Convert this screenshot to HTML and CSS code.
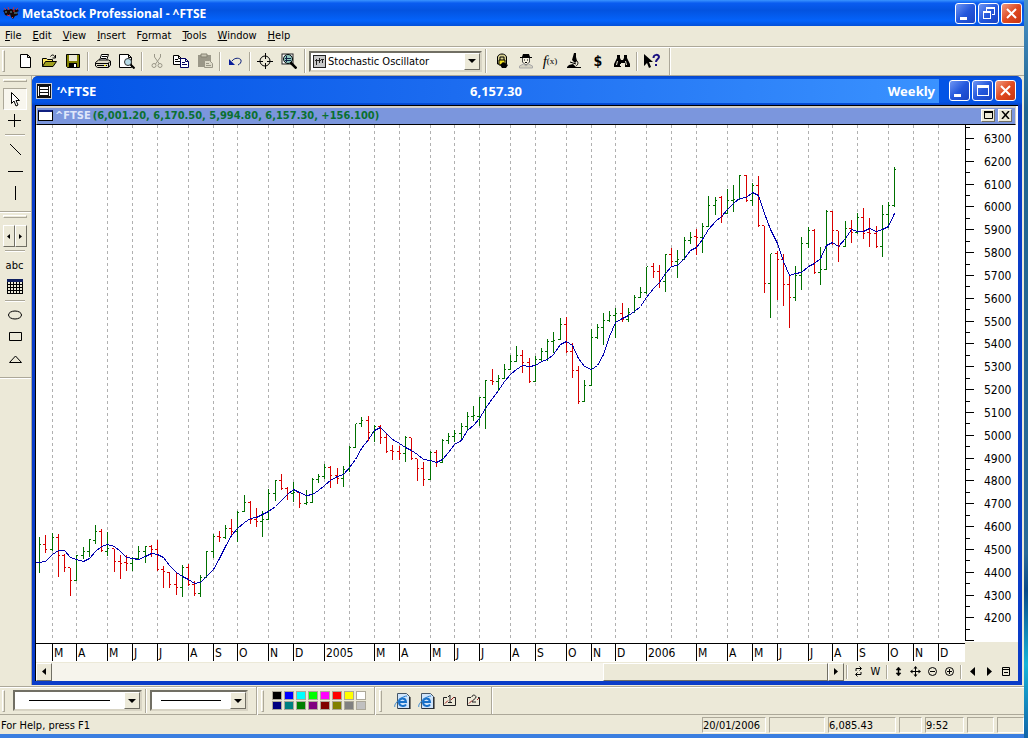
FILE: index.html
```html
<!DOCTYPE html>
<html lang="en">
<head>
  <meta charset="UTF-8">
  <title>MetaStock Professional - ^FTSE</title>
  <link rel="stylesheet" href="styles.css">
</head>
<body>

  <div class="app">

    <!-- Title bar -->
    <header class="titlebar">
      <svg class="logo" width="18" height="16" viewBox="0 0 18 16">
        <path d="M1 6l3-2 2 1 3-1 3 1 3-1 2 2-2 1 1 3-3 1-2 3-2-2-1-3-2 2-3-1-1-3z" fill="#180808"/>
        <path d="M2 3l2 2M6 2l1 3M12 2l-1 3M16 3l-2 2" stroke="#c03040" stroke-width="1"/>
        <path d="M3 7h2M8 7h2M12 8h3" stroke="#58a0b0"/>
        <path d="M5 10l3 1M11 6l2 0M10 12l1 1" stroke="#e03040"/>
      </svg>
      <h1>MetaStock Professional - ^FTSE</h1>
      <div class="win-buttons">
        <button class="win-btn" aria-label="Minimize"><svg width="19" height="19"><rect x="4" y="13" width="7" height="3"/></svg></button>
        <button class="win-btn" aria-label="Restore"><svg width="19" height="19"><path d="M7 3h9v8h-3v-1h2V5H8v2H7zM4 7h8v8H4zM5 9v5h6V9z" fill-rule="evenodd"/></svg></button>
        <button class="win-btn close" aria-label="Close"><svg width="19" height="19"><path d="M5 5l9 9M14 5l-9 9" class="cross"/></svg></button>
      </div>
    </header>

    <!-- Menu -->
    <nav class="menu">
      <button><u>F</u>ile</button>
      <button><u>E</u>dit</button>
      <button><u>V</u>iew</button>
      <button><u>I</u>nsert</button>
      <button>F<u>o</u>rmat</button>
      <button><u>T</u>ools</button>
      <button><u>W</u>indow</button>
      <button><u>H</u>elp</button>
    </nav>

    <!-- Main toolbar -->
    <div class="toolbar">
      <span class="grip"></span>
      <button class="tool" aria-label="New"><svg width="16" height="16"><path d="M3.500 1.500h7l3 3v10h-10zM10.500 1.500v3h3" fill="#fff" stroke="#000"/></svg></button>
      <button class="tool" aria-label="Open"><svg width="16" height="16"><path d="M1.500 13.500v-8h4l1 1h5v3" fill="#ffe860" stroke="#000"/><path d="M1.500 13.500l3-5h11l-3.500 5z" fill="#a0a020" stroke="#000"/><path d="M9.500 3.500c2-3 4-1 4.500 1M14.500 2v3h-3" fill="none" stroke="#000"/></svg></button>
      <button class="tool" aria-label="Save"><svg width="16" height="16"><path d="M1.500 1.500h13v13h-12l-1-1z" fill="#808000" stroke="#000"/><path d="M4 2h8v6H4z" fill="#ece9d8"/><path d="M4 10h8v4H4z" fill="#000"/><path d="M9 11h2v3H9z" fill="#fff"/></svg></button>
      <span class="sep"></span>
      <button class="tool" aria-label="Print"><svg width="16" height="16"><path d="M4.500 7.500l2-6h7l-2 6" fill="#fff" stroke="#000"/><path d="M7 3.500h5M6 5.500h5" stroke="#000"/><path d="M.5 9.500l3-2.500h10l2 1v4l-2 2.500h-11l-2-1.500z" fill="#e0dcc8" stroke="#000"/><path d="M1 10.500h12l2-2M2 12.500h10M13.500 10v4" stroke="#000" fill="none"/><path d="M9 12h2v1H9z" fill="#e8e000"/></svg></button>
      <button class="tool" aria-label="Print preview"><svg width="16" height="16"><path d="M.5 1.500h9l3 3v10H.5zM9.500 1.500v3h3" fill="#fff" stroke="#000"/><circle cx="9" cy="9" r="3.500" fill="#b8dce8" stroke="#333"/><path d="M11.500 11.500l4 4" stroke="#000" stroke-width="2"/></svg></button>
      <span class="sep"></span>
      <button class="tool" aria-label="Cut" disabled><svg width="16" height="16" fill="none" stroke="#9a9788"><path d="M5.500 1v3l5 7M11.500 1v3l-5 7"/><circle cx="5" cy="12.500" r="2"/><circle cx="11" cy="12.500" r="2"/></svg></button>
      <button class="tool" aria-label="Copy"><svg width="16" height="16" fill="#fff" stroke="#000"><path d="M.5 2.500h5l3 3v6h-8zM5.500 2.500v3h3M2 6.500h3M2 8.500h5"/><path d="M7.500 5.500h5l3 3v6h-8zM12.500 5.500v3h3M9 9.500h3M9 11.500h5" stroke="#000060"/></svg></button>
      <button class="tool" aria-label="Paste" disabled><svg width="16" height="16"><path d="M1 2h13v12H1z" fill="#9a9788"/><path d="M4 1h6v3H4z" fill="#c8c5b4" stroke="#858272"/><path d="M7.500 7.500h5l3 3v4h-8z" fill="#dedbca" stroke="#9a9788"/><path d="M9 10.500h3M9 12.500h5" stroke="#9a9788"/></svg></button>
      <span class="sep"></span>
      <button class="tool" aria-label="Undo"><svg width="16" height="16"><path d="M5 8c3-4 8-3 9-1 .5 2.500-1 4-3 5" fill="none" stroke="#0a1e7a"/><path d="M2 6v6h6z" fill="#0a1e9a"/></svg></button>
      <span class="sep"></span>
      <button class="tool" aria-label="Crosshair"><svg width="16" height="16" fill="none" stroke="#000"><circle cx="8" cy="8" r="5"/><path d="M8.500 0v6M8.500 10v6M0 8.500h6M10 8.500h6"/></svg></button>
      <button class="tool" aria-label="Zoom chart"><svg width="16" height="16"><rect x="1" y="1" width="11" height="10" fill="#fff" stroke="#222"/><circle cx="7" cy="6" r="4.500" fill="#90c8c0" stroke="#000"/><path d="M4 5.500h6M4 7.500h6M5.500 3v6" stroke="#124"/><path d="M9.500 9.500l6 6" stroke="#000" stroke-width="2.500"/></svg></button>
      <span class="sep wide"></span>
      <div class="combo indicator">
        <svg width="13" height="13"><rect x=".5" y=".5" width="12" height="12" fill="#c8c8c8" stroke="#222"/><path d="M3.500 4v6M6.500 3v5M9.500 4v4M2 5.500h3M5 5.500h3M8 4.500h3" stroke="#222"/></svg>
        <select aria-label="Indicator"><option>Stochastic Oscillator</option></select>
        <span class="arrow"></span>
      </div>
      <span class="sep wide"></span>
      <button class="tool" aria-label="Expert Advisor"><svg width="16" height="16"><path d="M3.500 4c1-4 8-4 9 0v7h-9z" fill="#d8d090" stroke="#000"/><path d="M5 7h6v5H5z" fill="#f0e020" stroke="#000"/><path d="M6 7V4h4v3" fill="none" stroke="#000"/><path d="M6 12l3-3 5 3-2 3H8z" fill="#000"/></svg></button>
      <button class="tool" aria-label="Explorer"><svg width="16" height="16"><path d="M4 4l1-3h6l1 3z" fill="#000"/><path d="M2 4.500h12" stroke="#000"/><path d="M4.500 5v4l3 3h1l3-3V5" fill="#f4f0e0" stroke="#444"/><path d="M6 7h1M9 7h1M7 9.500h2" stroke="#000"/><path d="M1.500 15v-2l4-2 2.500 2 2.500-2 4 2v2z" fill="#d4d1c0" stroke="#aaa"/></svg></button>
      <button class="tool fx" aria-label="Indicator Builder"><i>f</i><small>(x)</small></button>
      <button class="tool" aria-label="System Tester"><svg width="16" height="16"><path d="M8 0h2v4l1 4-2 2-3-3z" fill="#000"/><path d="M4 9l6 2M10 7c3 2 2 5 0 6" stroke="#000" fill="none"/><path d="M3 12l4-1 3 3H1z" fill="#000"/><path d="M1 14.500h14" stroke="#000" stroke-width="1"/></svg></button>
      <button class="tool dollar" aria-label="OptionScope">$</button>
      <button class="tool" aria-label="Find"><svg width="16" height="16"><path d="M3 2h3v3l1 2h2l1-2V2h3v3l3 6v3h-5v-4H7v4H0v-3l3-6z"/><path d="M3.500 8l-1 4M11.500 8l1 4M6.500 11v2" stroke="#ece9d8"/></svg></button>
      <span class="sep"></span>
      <button class="tool" aria-label="Context help"><svg width="18" height="16"><path d="M1 1v12l3-3 2 5 2-1-2-5h4z"/><path d="M10.500 5c0-4 5.500-4 5.500-1 0 2-3 2-3 5M13 11v2" fill="none" stroke="#1a1080" stroke-width="2"/></svg></button>
      <span class="sep end"></span>
    </div>

    <div class="workspace">

      <!-- Drawing tools -->
      <aside class="side">
        <div class="side-group">
          <span class="hgrip"></span>
          <button class="tool pressed" aria-label="Select"><svg width="16" height="16"><path d="M4.500 1.500v11l2.500-2.500 2 5 2-1-2-4.500h3.500z" fill="#fff" stroke="#000"/></svg></button>
          <button class="tool" aria-label="Crosshair"><svg width="16" height="16"><path d="M7.500 1v13M1 7.500h13" stroke="#000"/></svg></button>
          <span class="hsep"></span>
          <button class="tool" aria-label="Trendline"><svg width="16" height="16"><path d="M3 3l11 11" stroke="#000"/></svg></button>
          <button class="tool" aria-label="Horizontal line"><svg width="16" height="16"><path d="M1 8.500h15" stroke="#000"/></svg></button>
          <button class="tool" aria-label="Vertical line"><svg width="16" height="16"><path d="M8.500 1v14" stroke="#000"/></svg></button>
        </div>
        <div class="side-group">
          <span class="hgrip"></span>
          <div class="pair">
            <button aria-label="Previous"><svg width="5" height="7"><path d="M4 1v5L1 3.500z"/></svg></button>
            <button aria-label="Next"><svg width="5" height="7"><path d="M1 1v5l3-2.500z"/></svg></button>
          </div>
          <span class="hsep"></span>
          <button class="tool">abc</button>
          <button class="tool" aria-label="Grid"><svg width="16" height="16"><path d="M.5 2.500h15M.5 5.500h15M.5 8.500h15M.5 11.500h15M.5 14.500h15M.5 1v14M3.500 1v14M6.500 1v14M9.500 1v14M12.500 1v14M15.500 1v14" stroke="#000"/><path d="M0 0h16v3H0z" fill="#102060"/></svg></button>
          <span class="hsep"></span>
          <button class="tool" aria-label="Ellipse"><svg width="16" height="16"><ellipse cx="8" cy="8" rx="6.500" ry="4" fill="none" stroke="#000"/></svg></button>
          <button class="tool" aria-label="Rectangle"><svg width="16" height="16"><path d="M2.500 3.500h12v8h-12z" fill="none" stroke="#000"/></svg></button>
          <button class="tool" aria-label="Triangle"><svg width="16" height="16"><path d="M2.500 11.500h12L8.500 5z" fill="none" stroke="#000"/></svg></button>
        </div>
      </aside>

      <!-- Chart window -->
      <main class="chart-window">
        <div class="chart-title">
          <svg class="chart-icon" width="16" height="16"><path d="M0 0h16v16H0z" fill="#c8ccd8"/><path d="M1 1h14v14H1z" fill="#111"/><path d="M2 3h1v10H2zM13 3h1v10h-1zM4 4h8v2H4zM4 7h8v2H4zM4 10h8v2H4z" fill="#fff"/></svg>
          <div class="caption">
            <span>‘^FTSE</span>
            <span>6,157.30</span>
            <span>Weekly</span>
          </div>
          <div class="win-buttons">
            <button class="win-btn" aria-label="Minimize"><svg width="19" height="19"><rect x="4" y="13" width="7" height="3"/></svg></button>
            <button class="win-btn" aria-label="Maximize"><svg width="19" height="19"><path d="M4 4h12v11H4zM5 7v7h10V7z" fill-rule="evenodd"/></svg></button>
            <button class="win-btn close" aria-label="Close"><svg width="19" height="19"><path d="M5 5l9 9M14 5l-9 9" class="cross"/></svg></button>
          </div>
        </div>

        <div class="pane">
          <div class="pane-title">
            <span class="pane-icon"></span>
            <span class="symbol">^FTSE</span>
            <span class="quote">(6,001.20, 6,170.50, 5,994.80, 6,157.30, +156.100)</span>
            <button class="mini" aria-label="Maximize pane"><svg width="9" height="8"><path d="M.5 1h8v6.500h-8z" fill="none" stroke="#000"/><path d="M0 1h9" stroke="#000" stroke-width="2"/></svg></button>
            <button class="mini" aria-label="Close pane"><svg width="9" height="8"><path d="M1 0l7 8M8 0L1 8" stroke="#000" stroke-width="1.500"/></svg></button>
          </div>
          <div class="plot-row">
            <svg class="plot" id="plot" viewBox="36 125 929 516" preserveAspectRatio="none"></svg>
            <div class="y-axis" id="y-axis"></div>
          </div>
          <div class="x-row">
            <div class="x-axis" id="x-axis"></div>
            <div class="corner"></div>
          </div>
          <div class="scroll-row">
            <button class="scroll-btn" aria-label="Scroll left"><svg width="4" height="7"><path d="M4 0v7L0 3.500z"/></svg></button>
            <div class="track"><div class="thumb"></div></div>
            <button class="scroll-btn" aria-label="Scroll right"><svg width="4" height="7"><path d="M0 0v7l4-3.500z"/></svg></button>
            <span class="sep"></span>
            <button class="nav" aria-label="Refresh"><svg width="11" height="11" fill="none" stroke="#000"><path d="M3 5V2.500h5M6.500.5l2 2-2 2M8 6v2.500H3M4.500 6.500l-2 2 2 2"/></svg></button>
            <button class="nav">W</button>
            <span class="sep"></span>
            <button class="nav" aria-label="Scale vertically"><svg width="11" height="11"><path d="M5.500 1L8 4H6v3h2l-2.500 3L3 7h2V4H3z" stroke="#000" stroke-width=".5"/></svg></button>
            <button class="nav" aria-label="Move"><svg width="11" height="11"><path d="M5.500 1v9M1 5.500h9" stroke="#000"/><path d="M5.500 0l2 2.500h-4zM5.500 11l2-2.500h-4zM0 5.500l2.500-2v4zM11 5.500l-2.500-2v4z"/></svg></button>
            <button class="nav" aria-label="Zoom out"><svg width="11" height="11" fill="none" stroke="#000"><circle cx="5.500" cy="5.500" r="4"/><path d="M3 5.500h5"/></svg></button>
            <button class="nav" aria-label="Zoom in"><svg width="11" height="11" fill="none" stroke="#000"><circle cx="5.500" cy="5.500" r="4"/><path d="M3 5.500h5M5.500 3v5"/></svg></button>
            <span class="sep"></span>
            <button class="nav" aria-label="Previous"><svg width="11" height="11"><path d="M8 1v9L3 5.500z"/></svg></button>
            <button class="nav" aria-label="Next"><svg width="11" height="11"><path d="M3 1v9l5-4.500z"/></svg></button>
            <button class="nav" aria-label="Options"><svg width="11" height="11" fill="none" stroke="#000"><path d="M1.500 1.500h7v8h-7zM1 3.500h8M3 6.500h4"/></svg></button>
          </div>
        </div>
      </main>
    </div>

    <!-- Line styles and colours -->
    <div class="toolbar bottom">
      <span class="grip"></span>
      <div class="combo line-style">
        <select aria-label="Line style"><option></option></select>
        <span class="sample"></span>
        <span class="arrow"></span>
      </div>
      <span class="sep wide"></span>
      <div class="combo line-weight">
        <select aria-label="Line weight"><option></option></select>
        <span class="sample"></span>
        <span class="arrow"></span>
      </div>
      <span class="divider"></span>
      <span class="grip"></span>
      <div class="palette">
        <button class="c-black" aria-label="Black"></button>
        <button class="c-blue" aria-label="Blue"></button>
        <button class="c-cyan" aria-label="Cyan"></button>
        <button class="c-lime" aria-label="Lime"></button>
        <button class="c-magenta" aria-label="Magenta"></button>
        <button class="c-red" aria-label="Red"></button>
        <button class="c-yellow" aria-label="Yellow"></button>
        <button class="c-white" aria-label="White"></button>
        <button class="c-navy" aria-label="Navy"></button>
        <button class="c-teal" aria-label="Teal"></button>
        <button class="c-green" aria-label="Green"></button>
        <button class="c-purple" aria-label="Purple"></button>
        <button class="c-maroon" aria-label="Maroon"></button>
        <button class="c-olive" aria-label="Olive"></button>
        <button class="c-gray" aria-label="Gray"></button>
        <button class="c-silver" aria-label="Silver"></button>
      </div>
      <span class="divider"></span>
      <span class="grip"></span>
      <button class="tool" aria-label="Web page 1"><svg width="17" height="16"><path d="M3.500.5h9l3 3v12h-12z" fill="#cfe4fa" stroke="#456"/><path d="M16 4v12H4" fill="none" stroke="#111"/><path d="M12 11.500c-1.500 2.500-7 2-7-2.500s6.500-5 7 0H5" fill="none" stroke="#1870c8" stroke-width="2"/><path d="M1 14c-2-2 6-11 12-11" fill="none" stroke="#2a80d0"/></svg></button>
      <button class="tool" aria-label="Web page 2"><svg width="17" height="16"><path d="M3.500.5h9l3 3v12h-12z" fill="#cfe4fa" stroke="#456"/><path d="M16 4v12H4" fill="none" stroke="#111"/><path d="M12 11.500c-1.500 2.500-7 2-7-2.500s6.500-5 7 0H5" fill="none" stroke="#1870c8" stroke-width="2"/><path d="M1 14c-2-2 6-11 12-11" fill="none" stroke="#2a80d0"/></svg></button>
      <button class="tool" aria-label="Chart layout 1"><svg width="16" height="16" fill="none"><path d="M5 4.500H1.500v8h12v-8H11M6 4l2-2v7M6 9.500h4" stroke="#222"/><path d="M3 10.500l3-3M9 7l3-3" stroke="#a02020"/></svg></button>
      <button class="tool" aria-label="Chart layout 2"><svg width="16" height="16" fill="none"><path d="M5 4.500H1.500v8h12v-8H12M6 4c0-3 4-2 4 0s-4 3-4 5h4" stroke="#222"/><path d="M3 10.500l3-3M11 7l2-2" stroke="#a02020"/></svg></button>
      <span class="sep end"></span>
    </div>

    <!-- Status bar -->
    <footer class="status">
      <span class="hint">For Help, press F1</span>
      <span class="cell w64">20/01/2006</span>
      <span class="cell w56"></span>
      <span class="cell w68">6,085.43</span>
      <span class="cell w22"></span>
      <span class="cell w40">9:52</span>
      <span class="cell w27"></span>
      <span class="cell w27"></span>
    </footer>
    <div class="frame-bottom"></div>
  </div>
  <div class="desktop"></div>

  <script src="chart.js"></script>
</body>
</html>
```
FILE: styles.css
```css
:root {
  --face: #ece9d8;
  --shadow: #aca899;
  --dark: #716f64;
  --ui: "DejaVu Sans Condensed", Tahoma, sans-serif;
}

* {
  box-sizing: border-box;
}

body {
  margin: 0;
  display: flex;
  height: 100vh;
  font-family: var(--ui);
  font-size: 11px;
  color: #000;
  background-color: var(--face);
  overflow: hidden;
}

button {
  font: inherit;
  color: inherit;
  padding: 0;
  border: none;
  background: none;
}

.app {
  flex: 1;
  min-width: 0;
  display: flex;
  flex-direction: column;
}

.desktop {
  width: 4px;
  background: linear-gradient(#4a92c8, #20648f 15%, #2a6a98 75%, #0a4a88 80%, #18b4d8 90%, #1064a8);
}

/* title bar */
.titlebar {
  height: 26px;
  flex: none;
  display: flex;
  align-items: center;
  padding: 0 2px;
  gap: 2px;
  color: #fff;
  background: linear-gradient(#3a94ff, #0a5cf0 12%, #0353e0 40%, #0463fb 80%, #0450d8);
}

.titlebar h1 {
  flex: 1;
  margin: 0;
  font-family: "Noto Sans", sans-serif;
  font-size: 12px;
  font-weight: bold;
}

.win-buttons {
  display: flex;
  gap: 2px;
}

.win-btn {
  width: 21px;
  height: 21px;
  border: 1px solid #fff;
  border-radius: 3px;
  background: linear-gradient(135deg, #6f96f4, #2458dc 50%, #1a44c4);
}

.win-btn svg {
  display: block;
  fill: #fff;
}

.win-btn.close {
  background: linear-gradient(135deg, #f09a80, #e04a20 50%, #c83410);
}

.cross {
  stroke: #fff;
  stroke-width: 2;
}

/* menu */
.menu {
  height: 20px;
  flex: none;
  display: flex;
  align-items: center;
  gap: 11px;
  padding: 0 5px 2px;
}

/* toolbars */
.toolbar {
  height: 30px;
  flex: none;
  display: flex;
  align-items: center;
  border-top: 1px solid var(--shadow);
  border-bottom: 1px solid var(--shadow);
  box-shadow: inset 0 1px #fff;
}

.grip {
  width: 3px;
  height: 22px;
  margin: 0 8px 0 2px;
  border: 1px solid;
  border-color: #fff var(--shadow) var(--shadow) #fff;
}

.tool {
  width: 24px;
  height: 22px;
  display: flex;
  align-items: center;
  justify-content: center;
}

.sep {
  width: 2px;
  height: 19px;
  margin: 0 2px;
  border-left: 1px solid var(--shadow);
  border-right: 1px solid #fff;
}

.sep.wide {
  height: 24px;
  margin: 0 3px;
}

.sep.end {
  height: 27px;
  margin: 0 5px;
}

.divider {
  width: 2px;
  height: 28px;
  margin: 0 1px 0 8px;
  border-left: 1px solid var(--shadow);
  border-right: 1px solid #fff;
}

.fx {
  font-family: "Liberation Serif", serif;
  font-size: 15px;
}

.fx small {
  font-size: 9px;
}

.dollar {
  font-size: 14px;
  font-weight: bold;
}

.combo {
  position: relative;
  display: flex;
  align-items: center;
  height: 21px;
  border: 2px solid;
  border-color: var(--dark) #d8d4c4 #d8d4c4 var(--dark);
  background-color: #fff;
}

.combo svg {
  margin: 0 2px;
}

.combo select {
  flex: 1;
  min-width: 0;
  height: 17px;
  appearance: none;
  border: none;
  padding: 0;
  background: none;
  font: inherit;
  color: #000;
}

.indicator {
  width: 173px;
}

.line-style {
  width: 129px;
}

.line-weight {
  width: 98px;
}

.sample {
  position: absolute;
  left: 14px;
  right: 30px;
  border-top: 1px solid #000;
}

.line-weight .sample {
  left: 9px;
  right: 25px;
}

.arrow {
  width: 16px;
  height: 17px;
  display: flex;
  align-items: center;
  justify-content: center;
  border: 1px solid;
  border-color: #fff var(--dark) var(--dark) #fff;
  background-color: var(--face);
}

.arrow::after {
  content: "";
  border: 4px solid transparent;
  border-top-color: #000;
  border-bottom: none;
}

/* drawing tools */
.workspace {
  flex: 1;
  min-height: 0;
  display: flex;
  padding-right: 2px;
}

.side {
  width: 32px;
  border-right: 1px solid var(--shadow);
}

.side-group {
  display: flex;
  flex-direction: column;
  align-items: center;
  padding: 0 2px 7px 0;
  border-bottom: 1px solid var(--shadow);
  box-shadow: 0 1px #fff;
}

.hgrip {
  width: 24px;
  height: 3px;
  margin: 3px 0 6px;
  border: 1px solid;
  border-color: #fff var(--shadow) var(--shadow) #fff;
}

.hsep {
  width: 20px;
  height: 2px;
  margin: 2px 0;
  border-top: 1px solid var(--shadow);
  border-bottom: 1px solid #fff;
}

.pressed {
  border: 1px solid;
  border-color: var(--shadow) #fff #fff var(--shadow);
  background-color: #f8f6ee;
}

.pair {
  display: flex;
  height: 24px;
  padding: 1px 0;
}

.pair button {
  width: 12px;
  border: 1px solid;
  border-color: #fff var(--dark) var(--dark) #fff;
}

/* chart window */
.chart-window {
  flex: 1;
  min-width: 0;
  display: flex;
  flex-direction: column;
  padding: 0 4px 4px 3px;
  border-radius: 6px 6px 0 0;
  background-color: #0a3cc8;
}

.chart-title {
  height: 29px;
  flex: none;
  display: flex;
  align-items: center;
  gap: 5px;
  margin: 0 -4px 0 -3px;
  padding: 0 6px 0 4px;
  border-radius: 6px 6px 0 0;
  background: linear-gradient(#0a48c8, #0354e6 10%, #0354e6 90%, #0444c8);
}

.caption {
  flex: 1;
  height: 24px;
  display: grid;
  grid-template-columns: 1fr auto 1fr;
  align-items: center;
  margin-right: 5px;
  padding-right: 4px;
  color: #fff;
  font-family: "Noto Sans", sans-serif;
  font-size: 13px;
  font-weight: bold;
  background: linear-gradient(90deg, #0354e6, #1c6cf0 45%, #3a92ff);
}

.caption span:last-child {
  text-align: right;
}

.pane {
  flex: 1;
  min-height: 0;
  display: flex;
  flex-direction: column;
  border-top: 1px solid #000;
  border-left: 1px solid #000;
  background-color: #fff;
}

.pane-title {
  height: 19px;
  flex: none;
  display: flex;
  align-items: center;
  margin-right: 2px;
  border: solid #d4d0c8;
  border-width: 2px 1px;
  border-bottom: 1px solid #000;
  padding: 0 3px 2px 1px;
  background-color: #7b96dd;
  font-size: 11px;
  font-weight: bold;
}

.pane-icon {
  width: 15px;
  height: 11px;
  margin-right: 2px;
  border: 1px solid #000;
  border-top: 2px solid #102080;
  background-color: #fff;
}

.symbol {
  margin-right: 2px;
  color: #dfe6fa;
}

.quote {
  flex: 1;
  color: #0a7030;
}

.mini {
  width: 14px;
  height: 13px;
  margin-left: 3px;
  display: flex;
  align-items: center;
  justify-content: center;
  border: 1px solid;
  border-color: #fff var(--dark) var(--dark) #fff;
  background-color: var(--face);
}

.plot-row {
  flex: 1;
  min-height: 0;
  display: flex;
}

.plot {
  flex: 1;
  min-width: 0;
  height: 100%;
  shape-rendering: crispEdges;
}

.plot path {
  fill: none;
  vector-effect: non-scaling-stroke;
}

.grid {
  stroke: #b0b0b0;
  stroke-dasharray: 3 3;
}

.up {
  stroke: #007000;
}

.down {
  stroke: #d80000;
}

.average {
  stroke: #0000b0;
}

.y-axis,
.corner {
  position: relative;
  width: 53px;
}

.y-axis {
  border-left: 1px solid #000;
  font-size: 12px;
  line-height: 14px;
}

/* each mark's top comes from its price */
.y-mark {
  position: absolute;
  left: 0;
  width: 4px;
  height: 1px;
  background-color: #000;
}

.y-mark.major {
  width: 8px;
}

.y-mark span {
  position: absolute;
  left: 18px;
  top: -6px;
}

.x-row {
  height: 21px;
  flex: none;
  display: flex;
}

.x-axis {
  position: relative;
  flex: 1;
  margin-top: 2px;
  border-top: 1px solid #000;
  font-size: 12px;
  line-height: 18px;
}

.x-axis span {
  position: absolute;
  top: 0;
  height: 17px;
  padding-left: 1px;
  border-left: 1px solid #000;
}

.corner {
  margin-top: 1px;
  background-color: var(--face);
}

.scroll-row {
  height: 19px;
  flex: none;
  display: flex;
  align-items: center;
  padding-right: 3px;
  background-color: var(--face);
}

.scroll-btn {
  width: 16px;
  height: 18px;
  border: 1px solid;
  border-color: #fff var(--dark) var(--dark) #fff;
  background-color: var(--face);
}

.track {
  flex: 1;
  height: 18px;
  background-color: #f6f4ec;
}

.thumb {
  width: 29%;
  height: 100%;
  margin-left: auto;
  border: 1px solid;
  border-color: #fff var(--dark) var(--dark) #fff;
  background-color: var(--face);
}

.scroll-row .sep {
  height: 14px;
}

.nav {
  width: 17px;
  height: 18px;
  display: flex;
  align-items: center;
  justify-content: center;
}

/* bottom toolbar */
.toolbar.bottom {
  height: 29px;
  margin-top: 1px;
}

.palette {
  display: grid;
  grid-template-columns: repeat(8, 10px);
  grid-auto-rows: 9px;
  gap: 1px 2px;
}

.palette button {
  border: 1px solid var(--shadow);
}

.c-black { background-color: #000; }
.c-blue { background-color: #0000ff; }
.c-cyan { background-color: #00ffff; }
.c-lime { background-color: #00ff00; }
.c-magenta { background-color: #ff00ff; }
.c-red { background-color: #ff0000; }
.c-yellow { background-color: #ffff00; }
.c-white { background-color: #fff; }
.c-navy { background-color: #000080; }
.c-teal { background-color: #008080; }
.c-green { background-color: #008000; }
.c-purple { background-color: #800080; }
.c-maroon { background-color: #800000; }
.c-olive { background-color: #808000; }
.c-gray { background-color: #808080; }
.c-silver { background-color: #c0c0c0; }

/* status bar */
.status {
  height: 19px;
  flex: none;
  display: flex;
  gap: 3px;
  padding: 2px 0 0 1px;
  line-height: 15px;
}

.hint {
  flex: 1;
  line-height: 17px;
}

.cell {
  height: 16px;
  border: 1px solid;
  border-color: var(--shadow) #fff #fff var(--shadow);
}

.w22 { width: 23px; }
.w27 { width: 27px; }
.w40 { width: 39px; }
.w56 { width: 56px; }
.w64 { width: 64px; }
.w68 { width: 68px; }

.frame-bottom {
  height: 4px;
  flex: none;
  background-color: #3a7ee0;
}
```
FILE: chart.js
```js
// Weekly bars in plot units: high, low, open, close
const bars = [
  [537,573,563,545],[535,553,545,550],[533,551,550,538],[534,577,538,556],[554,572,556,568],
  [568,596,568,581],[555,581,581,556],[547,559,556,552],[539,557,552,540],[525,544,541,532],
  [529,552,532,551],[532,556,552,549],[549,572,549,562],[555,579,562,564],[555,571,563,564],
  [557,571,564,559],[546,559,559,552],[546,563,552,547],[545,557,547,550],[540,571,550,570],
  [566,588,570,572],[572,588,573,585],[573,595,585,588],[565,597,588,568],[564,586,568,585],
  [581,596,585,594],[575,597,594,578],[551,578,578,552],[534,558,552,537],[531,542,537,538],
  [525,539,538,529],[519,535,529,532],[511,542,532,513],[495,512,512,503],[501,524,503,520],
  [508,527,520,522],[511,537,522,520],[489,520,520,494],[480,501,494,481],[474,490,481,489],
  [487,500,489,494],[482,502,494,493],[492,508,493,504],[490,505,504,503],[478,503,503,480],
  [474,483,480,477],[464,479,477,468],[466,488,468,476],[468,484,476,479],[466,487,479,470],
  [446,472,470,448],[424,448,448,424],[417,427,424,421],[416,441,421,433],[425,442,433,427],
  [425,444,427,438],[434,453,438,452],[445,460,451,452],[446,460,452,454],[436,462,454,438],
  [438,460,438,459],[459,481,459,469],[462,486,469,480],[451,480,480,453],[450,467,453,463],
  [439,463,463,441],[433,444,441,437],[430,442,437,434],[423,440,434,427],[412,431,427,417],
  [406,421,417,416],[397,426,417,398],[380,429,398,381],[369,385,381,382],[375,391,382,379],
  [364,379,379,370],[355,370,370,362],[346,362,362,356],[350,373,356,363],[358,383,363,382],
  [356,382,382,360],[348,361,360,352],[339,361,352,342],[332,353,342,341],[318,340,340,325],
  [317,353,325,352],[343,378,352,371],[366,404,371,402],[380,402,402,386],[329,386,386,338],
  [324,339,338,328],[313,345,328,321],[311,322,321,316],[308,338,316,314],[303,322,314,320],
  [308,322,320,313],[295,313,313,298],[287,298,298,293],[267,294,293,267],[263,278,267,272],
  [265,288,272,282],[254,292,282,255],[248,267,255,262],[250,278,262,260],[237,260,260,241],
  [232,244,241,238],[229,255,237,238],[223,253,238,227],[196,227,227,206],[197,215,206,201],
  [196,223,198,217],[189,214,214,201],[185,212,201,200],[175,200,200,176],[175,202,176,201],
  [183,206,201,186],[176,227,186,226],[226,293,226,284],[254,318,284,254],[251,300,254,260],
  [254,306,260,285],[274,328,285,298],[266,301,298,276],[237,290,276,244],[227,248,244,231],
  [229,274,231,273],[247,285,273,270],[210,270,270,212],[211,245,212,231],[231,262,231,247],
  [221,247,247,229],[220,243,229,233],[213,234,233,218],[208,239,218,234],[218,247,233,234],
  [226,248,234,247],[205,257,247,215],[202,228,215,206],[167,207,206,170]
];

// Moving average, one point per bar
const average = [
  563,562,555,551,551,558,560,562,559,552,547,545,547,552,558,559,560,557,554,555,
  558,566,573,577,580,584,583,577,570,559,547,536,529,523,519,518,515,512,507,501,
  495,490,493,496,495,491,486,481,477,475,468,460,449,440,431,428,434,440,444,448,
  451,455,460,461,463,460,453,445,441,431,426,419,409,399,391,382,375,370,366,367,
  366,362,360,355,345,342,346,359,367,370,366,355,337,323,319,316,312,307,298,289,
  283,274,267,266,259,251,248,240,230,222,217,210,204,199,198,193,196,214,230,244,
  262,276,274,273,267,264,259,246,243,247,239,230,232,232,229,232,230,227,214
];

// First week of each month and its label
const months = [
  [2,'M'],[6,'A'],[11,'M'],[15,'J'],[19,'J'],[24,'A'],[28,'S'],[32,'O'],[37,'N'],[41,'D'],
  [46,'2005'],[50,''],[54,'M'],[58,'A'],[63,'M'],[67,'J'],[71,'J'],[76,'A'],[80,'S'],[85,'O'],
  [89,'N'],[93,'D'],[98,'2006'],[102,''],[106,'M'],[111,'A'],[115,'M'],[119,'J'],[124,'J'],
  [128,'A'],[132,'S'],[137,'O'],[141,'N'],[145,'D']
];

const LEFT = 36, TOP = 125, WIDTH = 929, HEIGHT = 516;
const weekX = i => Math.round(39.2 + i * 6.196) + 0.5;
const priceY = p => Math.round(138 + (6300 - p) * 0.2283);

const plot = document.getElementById('plot');
function addPath(d, className) {
  const path = document.createElementNS('http://www.w3.org/2000/svg', 'path');
  path.setAttribute('d', d);
  path.setAttribute('class', className);
  plot.appendChild(path);
}

let grid = '', up = '', down = '', line = 'M36 563';
months.forEach(([week, label]) => {
  grid += `M${weekX(week)} ${TOP}V${TOP + HEIGHT - 1}`;
  if (label) {
    const span = document.createElement('span');
    span.textContent = label;
    span.style.left = (weekX(week) - 0.5 - LEFT) / WIDTH * 100 + '%';
    document.getElementById('x-axis').appendChild(span);
  }
});
bars.forEach(([high, low, open, close], i) => {
  const x = weekX(i);
  const d = `M${x} ${high}V${low}M${x - 2.5} ${open - 0.5}h2M${x + 0.5} ${close - 0.5}h1`;
  if (close < open) up += d; else down += d;
  line += `L${x} ${average[i] - 0.5}`;
});
addPath(grid, 'grid');
addPath(up, 'up');
addPath(down, 'down');
addPath(line, 'average');

// Price scale
for (let p = 6350; p >= 4100; p -= 50) {
  const mark = document.createElement('div');
  mark.className = 'y-mark';
  mark.style.top = (priceY(p) - TOP) / HEIGHT * 100 + '%';
  if (p % 100 === 0) {
    mark.classList.add('major');
    if (p > 4100) mark.innerHTML = `<span>${p}</span>`;
  }
  document.getElementById('y-axis').appendChild(mark);
}
```
